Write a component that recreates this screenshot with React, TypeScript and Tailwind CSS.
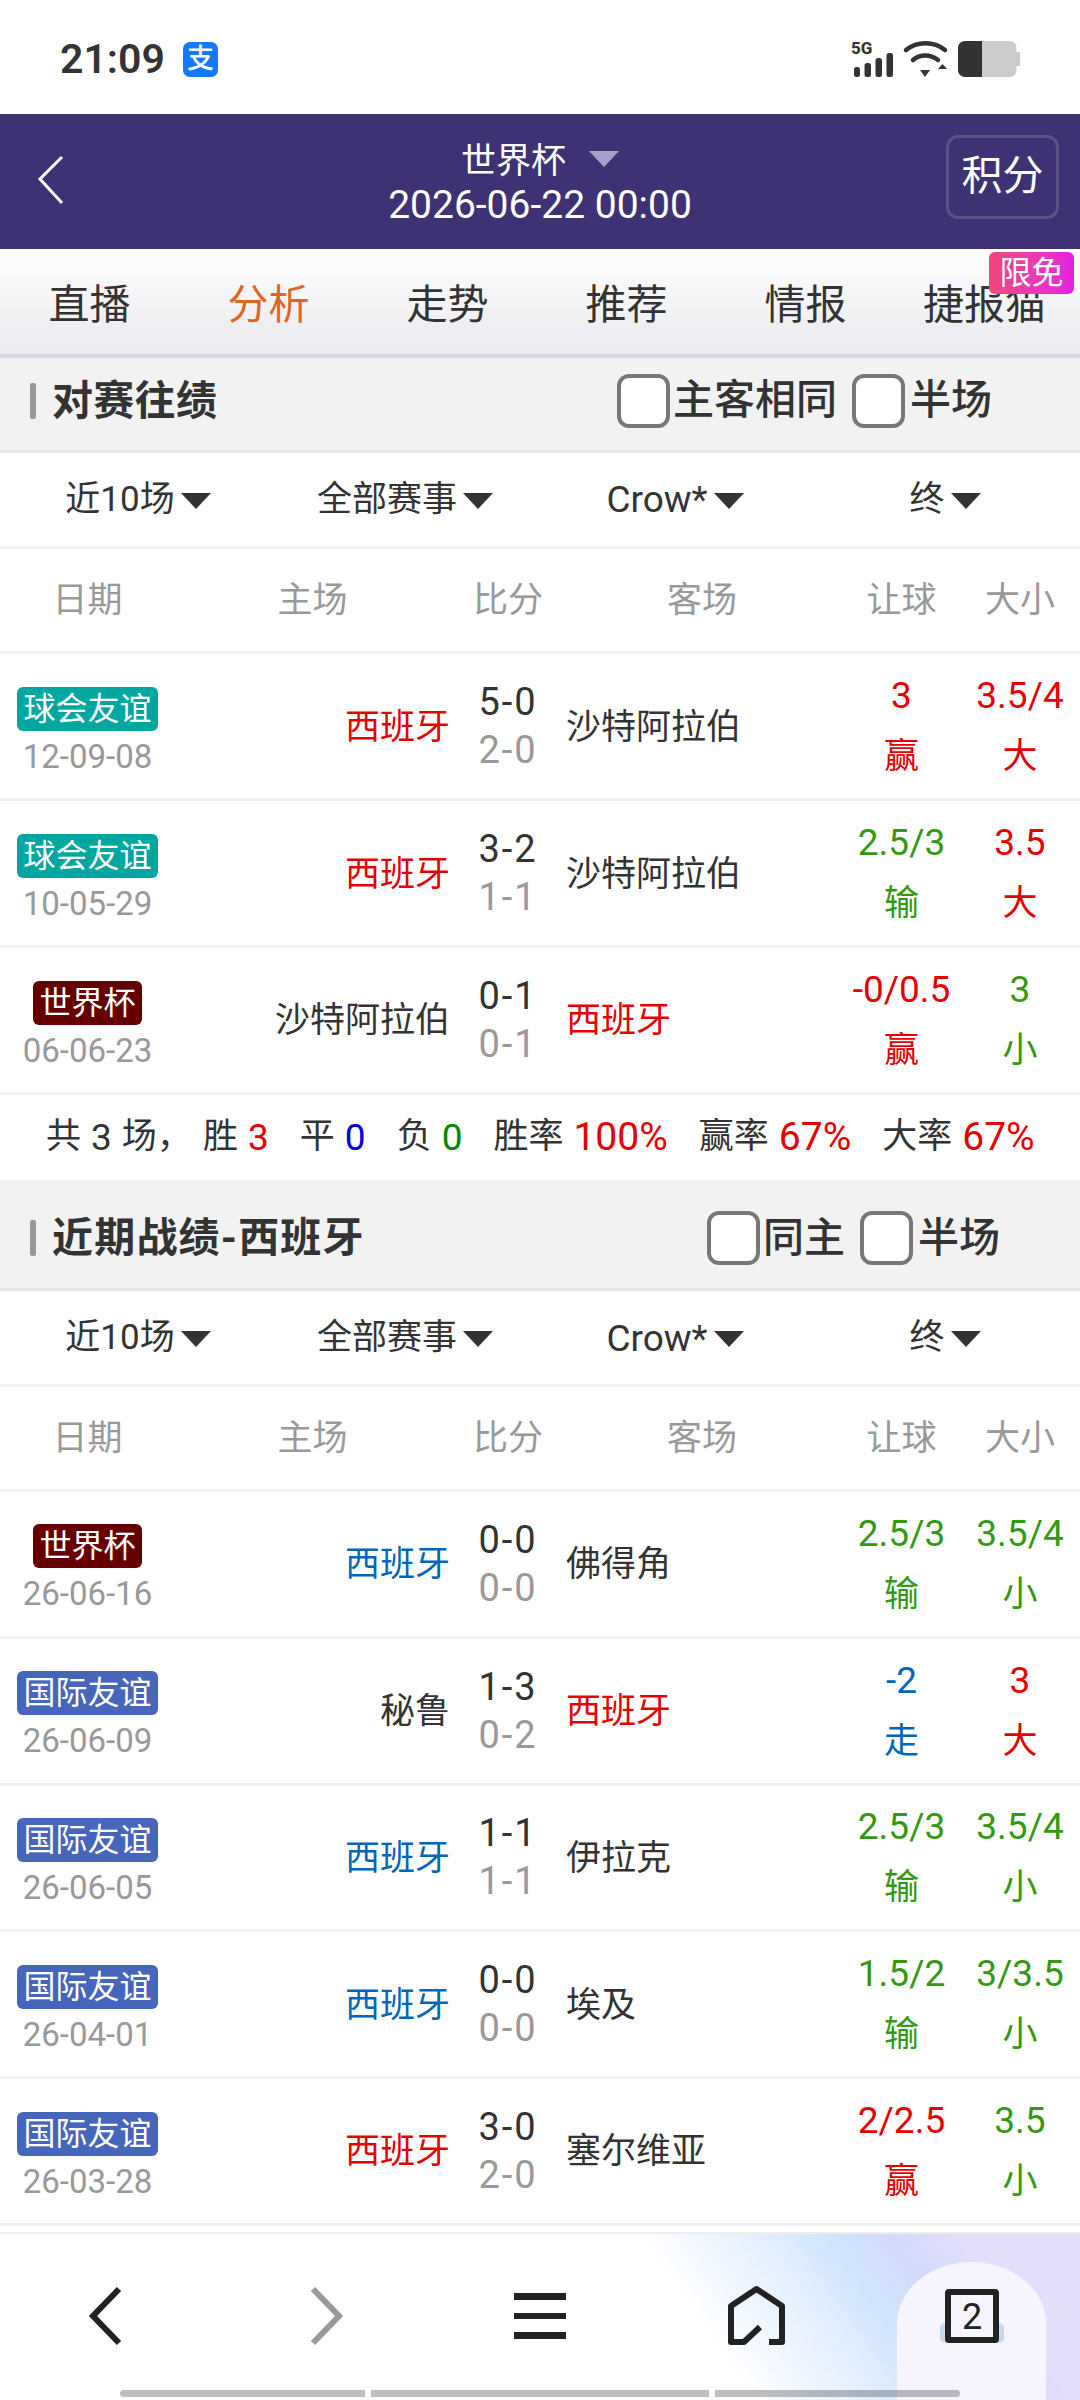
import type { ReactNode } from "react";

const RED = "text-[#e60000]";
const GREEN = "text-[#339911]";
const BLUE = "text-[#0066bb]";
const DARK = "text-[#333333]";

type Row = {
  badge: string;
  badgeColor: string;
  date: string;
  home: string;
  homeColor: string;
  s1: string;
  s2: string;
  away: string;
  awayColor: string;
  h1: string;
  h2: string;
  hColor: string;
  d1: string;
  d2: string;
  dColor: string;
};

const TEAL = "bg-[#00a7a0]";
const MAROON = "bg-[#660000]";
const INDIGO = "bg-[#4666bb]";

const rows1: Row[] = [
  { badge: "球会友谊", badgeColor: TEAL, date: "12-09-08", home: "西班牙", homeColor: RED, s1: "5-0", s2: "2-0", away: "沙特阿拉伯", awayColor: DARK, h1: "3", h2: "赢", hColor: RED, d1: "3.5/4", d2: "大", dColor: RED },
  { badge: "球会友谊", badgeColor: TEAL, date: "10-05-29", home: "西班牙", homeColor: RED, s1: "3-2", s2: "1-1", away: "沙特阿拉伯", awayColor: DARK, h1: "2.5/3", h2: "输", hColor: GREEN, d1: "3.5", d2: "大", dColor: RED },
  { badge: "世界杯", badgeColor: MAROON, date: "06-06-23", home: "沙特阿拉伯", homeColor: DARK, s1: "0-1", s2: "0-1", away: "西班牙", awayColor: RED, h1: "-0/0.5", h2: "赢", hColor: RED, d1: "3", d2: "小", dColor: GREEN },
];

const rows2: Row[] = [
  { badge: "世界杯", badgeColor: MAROON, date: "26-06-16", home: "西班牙", homeColor: BLUE, s1: "0-0", s2: "0-0", away: "佛得角", awayColor: DARK, h1: "2.5/3", h2: "输", hColor: GREEN, d1: "3.5/4", d2: "小", dColor: GREEN },
  { badge: "国际友谊", badgeColor: INDIGO, date: "26-06-09", home: "秘鲁", homeColor: DARK, s1: "1-3", s2: "0-2", away: "西班牙", awayColor: RED, h1: "-2", h2: "走", hColor: BLUE, d1: "3", d2: "大", dColor: RED },
  { badge: "国际友谊", badgeColor: INDIGO, date: "26-06-05", home: "西班牙", homeColor: BLUE, s1: "1-1", s2: "1-1", away: "伊拉克", awayColor: DARK, h1: "2.5/3", h2: "输", hColor: GREEN, d1: "3.5/4", d2: "小", dColor: GREEN },
  { badge: "国际友谊", badgeColor: INDIGO, date: "26-04-01", home: "西班牙", homeColor: BLUE, s1: "0-0", s2: "0-0", away: "埃及", awayColor: DARK, h1: "1.5/2", h2: "输", hColor: GREEN, d1: "3/3.5", d2: "小", dColor: GREEN },
  { badge: "国际友谊", badgeColor: INDIGO, date: "26-03-28", home: "西班牙", homeColor: RED, s1: "3-0", s2: "2-0", away: "塞尔维亚", awayColor: DARK, h1: "2/2.5", h2: "赢", hColor: RED, d1: "3.5", d2: "小", dColor: GREEN },
];

const COLS = "grid grid-cols-[175px_275px_116px_272px_127px_110px_5px]";

function Caret() {
  return (
    <svg width="30" height="16" viewBox="0 0 30 16" className="mt-[2px]">
      <path d="M0 0H30L15 16Z" fill="#333333" />
    </svg>
  );
}

function Check() {
  return <span className="block w-[53px] h-[54px] shrink-0 rounded-[12px] border-[4px] border-[#777777] bg-white" />;
}

function SectionTitle({ title, sizing, titleClass, opts }: { title: string; sizing: string; titleClass: string; opts: ReactNode }) {
  return (
    <div className={`flex items-center justify-between ${sizing} bg-[#f2f2f2] border-b-[3px] border-[#e6e6e6] pl-[30px]`}>
      <div className="flex items-center">
        <span className="block w-[6px] h-[36px] bg-[#999999] rounded-[2px] mr-[16px]" />
        <span className={`text-[41px] font-bold text-[#333333] leading-[48px] ${titleClass}`}>{title}</span>
      </div>
      {opts}
    </div>
  );
}

function Filters() {
  const items = ["近10场", "全部赛事", "Crow*", "终"];
  return (
    <div className="grid grid-cols-4 h-[96px] pt-[2px] border-b-[3px] border-[#f2f2f2]">
      {items.map((t, i) => (
        <div key={t} className={`flex items-center justify-center gap-[6px] text-[35px] text-[#333333] ${i === 0 ? "pl-[6px]" : ""}`}>
          <span className={t === "Crow*" ? "text-[37px]" : ""}>{t}</span>
          <Caret />
        </div>
      ))}
    </div>
  );
}

function TableHead({ height }: { height: string }) {
  const items = ["日期", "主场", "比分", "客场", "让球", "大小"];
  return (
    <div className={`${COLS} ${height} pt-[3px] border-b-[3px] border-[#f2f2f2] items-center text-[35px] text-[#999999]`}>
      {items.map((t) => (
        <div key={t} className="text-center">{t}</div>
      ))}
    </div>
  );
}

function MatchRow({ r }: { r: Row }) {
  return (
    <div className={`${COLS} h-[147px] border-b-[3px] border-[#f2f2f2] items-center`}>
      <div className="flex flex-col items-center pt-[15px]">
        <span className={`${r.badgeColor} text-white text-[32px] leading-[44px] px-[6px] rounded-[6px]`}>{r.badge}</span>
        <span className="text-[33px] leading-[48px] text-[#999999] mt-[2px]">{r.date}</span>
      </div>
      <div className={`text-right text-[35px] pt-[3px] ${r.homeColor}`}>{r.home}</div>
      <div className="flex flex-col items-center text-[38px] leading-[48px] tracking-[2px]">
        <span className={DARK}>{r.s1}</span>
        <span className="text-[#999999]">{r.s2}</span>
      </div>
      <div className={`text-left text-[35px] pt-[3px] ${r.awayColor}`}>{r.away}</div>
      <div className={`flex flex-col items-center leading-[61px] ${r.hColor}`}>
        <span className="text-[37px]">{r.h1}</span>
        <span className="text-[35px]">{r.h2}</span>
      </div>
      <div className={`flex flex-col items-center leading-[61px] ${r.dColor}`}>
        <span className="text-[37px]">{r.d1}</span>
        <span className="text-[35px]">{r.d2}</span>
      </div>
    </div>
  );
}

function StatusBar() {
  return (
    <div className="flex items-center justify-between h-[114px] pt-[5px] pl-[60px] pr-[60px] bg-white">
      <div className="flex items-center gap-[18px]">
        <span className="text-[41px] font-semibold text-[#333333]">21:09</span>
        <span className="flex items-center justify-center w-[35px] h-[35px] rounded-[7px] bg-[#1677ff] text-white text-[27px] leading-none font-medium">支</span>
      </div>
      <svg width="169" height="40" viewBox="0 -2 169 40">
        <text x="0" y="13" fontSize="17" fontWeight="800" fill="#333" fontFamily="Roboto, sans-serif">5G</text>
        <rect x="3" y="26" width="6" height="10" rx="2.5" fill="#333" />
        <rect x="13.5" y="22" width="6.5" height="14" rx="2.5" fill="#333" />
        <rect x="24.5" y="17" width="6.5" height="19" rx="2.5" fill="#333" />
        <rect x="35.5" y="12" width="6.5" height="24" rx="2.5" fill="#333" />
        <path d="M55 9C66 0 83 0 94 9" stroke="#333" strokeWidth="4.5" fill="none" strokeLinecap="round" />
        <path d="M62 19C69 13 79 13 87 19" stroke="#333" strokeWidth="4.5" fill="none" strokeLinecap="round" />
        <path d="M69 29H79L74 36Z" fill="#333" />
        <path d="M87 28L91.5 23L96 28Z" fill="#333" />
        <path d="M107 7C107 3 110 0 114 0H131V36H114C110 36 107 33 107 29Z" fill="#333" />
        <path d="M131 0H158C163 0 165.5 3 165.5 7V11H169V25H165.5V29C165.5 33 163 36 158 36H131Z" fill="#cbcbcb" />
      </svg>
    </div>
  );
}

function Header() {
  return (
    <div className="relative flex flex-col items-center h-[135px] bg-[#3e3274] text-white">
      <svg width="28" height="50" viewBox="0 0 28 50" className="absolute left-[37px] top-[41px]">
        <path d="M25 2L3 24L25 48" stroke="#fff" strokeWidth="3" fill="none" />
      </svg>
      <div className="flex items-center mt-[24px] h-[48px] text-[35px] leading-[48px]">
        <span>世界杯</span>
        <svg width="30" height="16" viewBox="0 0 30 16" className="ml-[23px] mb-[6px]">
          <path d="M0 0H30L15 16Z" fill="#a7a0c8" />
        </svg>
      </div>
      <div className="text-[39px] leading-[44px] -mt-[3px]">2026-06-22 00:00</div>
      <div className="absolute left-[946px] top-[21px] w-[113px] h-[84px] flex items-center justify-center rounded-[12px] border-[3px] border-[#5a5186] text-[41px]">
        积分
      </div>
    </div>
  );
}

function Tabs() {
  const tabs = ["直播", "分析", "走势", "推荐", "情报", "捷报猫"];
  return (
    <div className="relative h-[109px] bg-gradient-to-b from-white to-[#e9e9ee] border-b-[4px] border-[#d8d8de]">
      <div className="grid grid-cols-[repeat(6,179px)] h-full items-center">
        {tabs.map((t, i) => (
          <div key={t} className={`text-center text-[41px] pt-[8px] ${i === 1 ? "text-[#e0651f]" : "text-[#333333]"}`}>
            {t}
          </div>
        ))}
      </div>
      <div className="absolute left-[989px] top-[3px] w-[85px] h-[42px] rounded-[6px] bg-gradient-to-r from-[#f0457a] to-[#e61de2] text-white text-[32px] leading-[42px] text-center">
        限免
      </div>
    </div>
  );
}

function Stat({ label, value, color, className = "" }: { label: string; value: string; color: string; className?: string }) {
  return (
    <span className={`flex items-center gap-[10px] ${className}`}>
      <span>{label}</span>
      <span className={`${value.endsWith("%") ? "text-[39px]" : "text-[37px]"} ${color}`}>{value}</span>
    </span>
  );
}

function Stats() {
  return (
    <div className="flex items-center h-[85px] pl-[46px] text-[35px] text-[#333333] whitespace-nowrap">
      <span className="flex items-center gap-[10px] w-[157px]">
        <span>共</span>
        <span className="text-[37px]">3</span>
        <span>场，</span>
      </span>
      <Stat label="胜" value="3" color="text-[#e60000]" />
      <Stat label="平" value="0" color="text-[#0000dd]" className="ml-[31px]" />
      <Stat label="负" value="0" color="text-[#008800]" className="ml-[31px]" />
      <Stat label="胜率" value="100%" color="text-[#e60000]" className="ml-[31px]" />
      <Stat label="赢率" value="67%" color="text-[#e60000]" className="ml-[31px]" />
      <Stat label="大率" value="67%" color="text-[#e60000]" className="ml-[31px]" />
    </div>
  );
}

function BottomNav() {
  return (
    <div className="relative h-[168px] border-t-[2px] border-[#eeeeee] bg-[linear-gradient(55deg,#ffffff_63%,#d2e5fd_79%,#d3dafc_84%,#e4dffb_90%)] overflow-hidden">
      <div className="absolute left-[897px] top-[28px] w-[149px] h-[140px] rounded-tl-[75px_62px] rounded-tr-[75px_62px] bg-[#f6f5fe]" />
      <svg width="1080" height="166" viewBox="0 0 1080 166" className="absolute left-0 top-0">
        <path d="M119 55L93 82L119 109" stroke="#222" strokeWidth="6" fill="none" />
        <path d="M313 55L339 82L313 109" stroke="#999" strokeWidth="6" fill="none" />
        <rect x="514" y="59" width="52" height="7" fill="#222" />
        <rect x="514" y="79" width="52" height="6" fill="#222" />
        <rect x="514" y="98" width="52" height="7" fill="#222" />
        <path d="M769 108H782V72L756.5 55L731 72V108H744L760 93" stroke="#222" strokeWidth="6" fill="none" strokeLinejoin="round" />
        <rect x="940" y="89" width="64" height="20" rx="5" fill="#c8d8ef" />
        <rect x="948" y="58" width="48" height="48" rx="1" stroke="#222" strokeWidth="6" fill="#f6f5fe" />
        <text x="972" y="95" textAnchor="middle" fontSize="36" fill="#222" fontFamily="Roboto, sans-serif">2</text>
      </svg>
      <div className="absolute left-[120px] bottom-[3px] flex gap-[6px]">
        <span className="block w-[245px] h-[7px] rounded-l-full bg-black/25" />
        <span className="block w-[338px] h-[7px] bg-black/25" />
        <span className="block w-[245px] h-[7px] rounded-r-full bg-black/25" />
      </div>
    </div>
  );
}

export default function App() {
  return (
    <div className="w-[1080px] h-[2400px] overflow-hidden bg-white flex flex-col font-['Roboto','Noto_Sans_CJK_SC',sans-serif]">
      <StatusBar />
      <Header />
      <Tabs />
      <SectionTitle
        title="对赛往绩"
        titleClass="tracking-[0.3px]"
        sizing="h-[95px] pb-[5px]"
        opts={
          <div className="flex items-center pr-[88px] text-[41px] font-medium text-[#333333]">
            <Check />
            <span className="ml-[3px]">主客相同</span>
            <span className="ml-[15px]"><Check /></span>
            <span className="ml-[5px]">半场</span>
          </div>
        }
      />
      <Filters />
      <TableHead height="h-[106px]" />
      {rows1.map((r, i) => (
        <MatchRow key={i} r={r} />
      ))}
      <Stats />
      <SectionTitle
        title="近期战绩-西班牙"
        titleClass="tracking-[1.2px]"
        sizing="h-[111px] pt-[9px]"
        opts={
          <div className="flex items-center pr-[80px] text-[41px] font-medium text-[#333333]">
            <Check />
            <span className="ml-[3px]">同主</span>
            <span className="ml-[15px]"><Check /></span>
            <span className="ml-[5px]">半场</span>
          </div>
        }
      />
      <Filters />
      <TableHead height="h-[105px]" />
      {rows2.map((r, i) => (
        <MatchRow key={i} r={r} />
      ))}
      <div className="h-[6px]" />
      <BottomNav />
    </div>
  );
}
